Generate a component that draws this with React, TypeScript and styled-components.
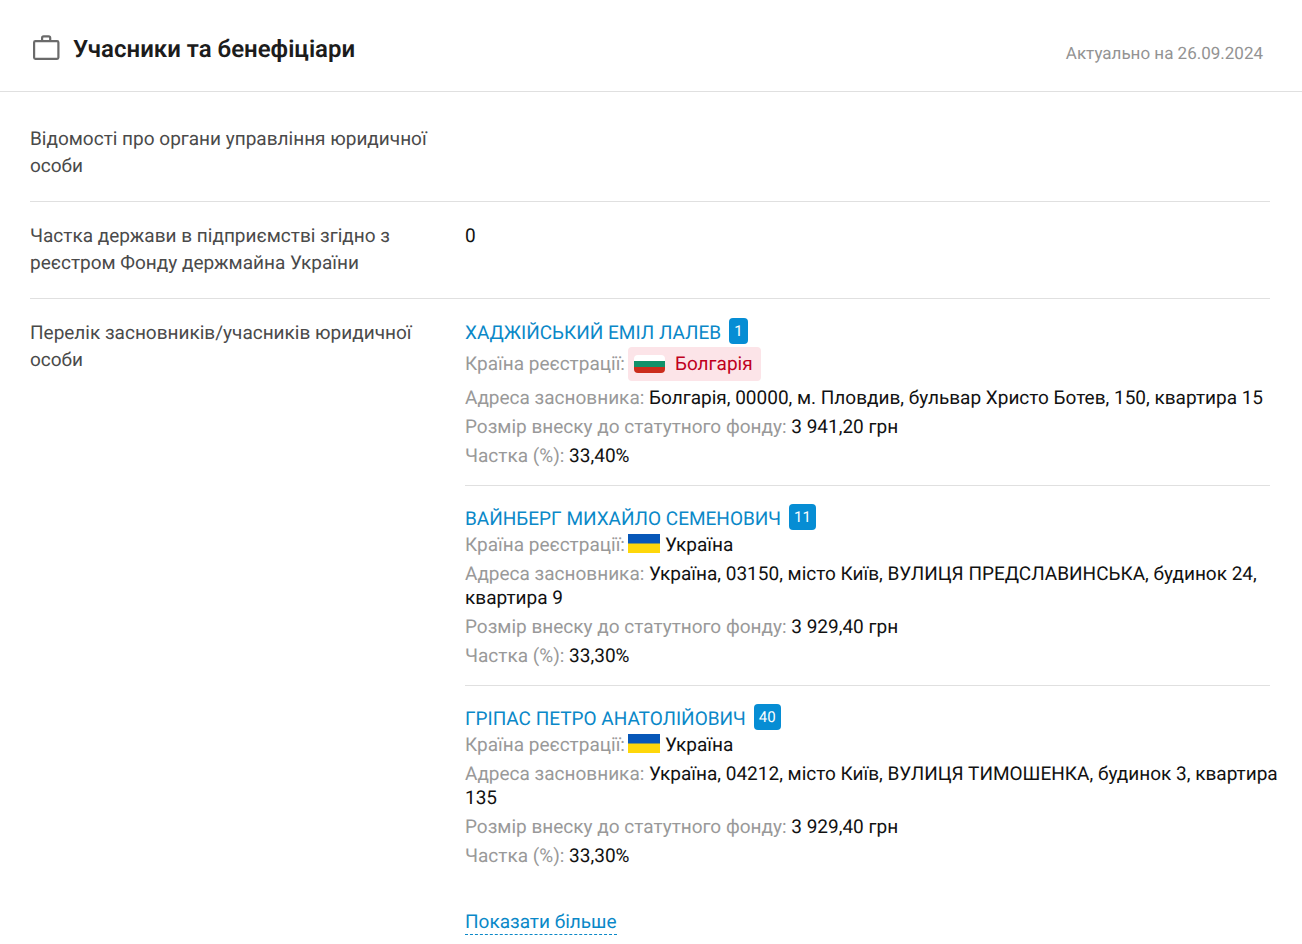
import React from "react";
import styled, { createGlobalStyle, css } from "styled-components";

const GlobalStyle = createGlobalStyle`
  *, *::before, *::after { box-sizing: border-box; }
  body {
    margin: 0;
    background: #fff;
    color: #111;
    font-family: Roboto, "Liberation Sans", sans-serif;
    font-size: 19px;
    line-height: 24px;
    text-rendering: geometricPrecision;
  }
`;

const Header = styled.header`
  display: flex;
  align-items: center;
  justify-content: space-between;
  padding: 29px 39px 22px 30px;
  border-bottom: 1px solid #e0e0e0;
`;

const Heading = styled.div`
  display: flex;
  align-items: center;
  gap: 11px;
`;

const Title = styled.h2`
  margin: 0;
  font-size: 24px;
  line-height: 40px;
  font-weight: 600;
  color: #1c1c1c;
`;

const Updated = styled.span`
  padding-top: 9px;
  font-size: 17px;
  color: #939393;
`;

const Details = styled.dl`
  margin: 0;
  padding: 13px 32px 0 30px;
`;

const Row = styled.div`
  display: grid;
  grid-template-columns: 435px minmax(0, 1fr);
  padding: 20px 0 22px;
  line-height: 27px;

  & + & {
    border-top: 1px solid #e0e0e0;
  }
`;

const Label = styled.dt`
  padding-right: 30px;
  color: #4a4a4a;
`;

const Value = styled.dd`
  margin: 0;
`;

const FounderList = styled.ul`
  margin: 0;
  padding: 0;
  list-style: none;
  line-height: 24px;
`;

const FounderItem = styled.li`
  padding-bottom: 17px;

  & + & {
    padding-top: 19px;
    border-top: 1px solid #e0e0e0;
  }
`;

const NameLine = styled.div`
  display: flex;
  align-items: flex-start;
  gap: 8px;
  margin-bottom: 1px;
  line-height: 27px;
`;

const linkColor = css`
  color: #0a88c8;
  text-decoration: none;
`;

const NameLink = styled.a`
  ${linkColor}
`;

const Badge = styled.a`
  margin-top: -1px;
  padding: 0 5px;
  border-radius: 4px;
  background: #068dd4;
  color: #fff;
  font-size: 15px;
  line-height: 26px;
  text-decoration: none;
`;

const Field = styled.div`
  & + & {
    margin-top: 5px;
  }
`;

const CountryField = styled(Field)`
  display: flex;
  align-items: center;
  gap: 3px;
`;

/* Long addresses may run into the page gutter before they wrap. */
const AddressField = styled(Field)`
  margin-right: -12px;
`;

const FieldName = styled.span`
  color: #999;
`;

const Country = styled.span<{ $flagged?: boolean }>`
  display: inline-flex;
  align-items: center;
  gap: 5px;
  ${(p) =>
    p.$flagged &&
    css`
      gap: 10px;
      padding: 5px 8px 5px 6px;
      border-radius: 4px;
      background: #fce4e8;
      color: #c00020;
    `}
`;

const Flag = styled.svg<{ $rounded?: boolean }>`
  display: block;
  flex: none;
  margin-bottom: ${(p) => (p.$rounded ? "0" : "3px")};
  border-radius: ${(p) => (p.$rounded ? "4px" : "0")};
`;

const MoreButton = styled.button`
  ${linkColor}
  display: block;
  margin-top: 25px;
  padding: 0;
  border: 0;
  border-bottom: 1px dashed #0a88c8;
  background: none;
  font: inherit;
  line-height: 24px;
  text-rendering: inherit;
  cursor: pointer;
`;

type CountryCode = "bg" | "ua";

interface Founder {
  name: string;
  links: number;
  code: CountryCode;
  country: string;
  address: string;
  amount: string;
  share: string;
}

const founders: Founder[] = [
  {
    name: "ХАДЖІЙСЬКИЙ ЕМІЛ ЛАЛЕВ",
    links: 1,
    code: "bg",
    country: "Болгарія",
    address: "Болгарія, 00000, м. Пловдив, бульвар Христо Ботев, 150, квартира 15",
    amount: "3 941,20 грн",
    share: "33,40%",
  },
  {
    name: "ВАЙНБЕРГ МИХАЙЛО СЕМЕНОВИЧ",
    links: 11,
    code: "ua",
    country: "Україна",
    address: "Україна, 03150, місто Київ, ВУЛИЦЯ ПРЕДСЛАВИНСЬКА, будинок 24, квартира 9",
    amount: "3 929,40 грн",
    share: "33,30%",
  },
  {
    name: "ГРІПАС ПЕТРО АНАТОЛІЙОВИЧ",
    links: 40,
    code: "ua",
    country: "Україна",
    address: "Україна, 04212, місто Київ, ВУЛИЦЯ ТИМОШЕНКА, будинок 3, квартира 135",
    amount: "3 929,40 грн",
    share: "33,30%",
  },
];

const BriefcaseIcon = () => (
  <svg width="32" height="32" viewBox="0 0 32 32" fill="none" stroke="#6a6a6a" strokeWidth="2.2" aria-hidden="true">
    <rect x="4.1" y="8.1" width="24.3" height="17.8" rx="1.3" />
    <path d="M12.1 8V5Q12.1 3.4 13.6 3.4H18.7Q20.2 3.4 20.2 5V8" />
  </svg>
);

const CountryFlag = ({ code }: { code: CountryCode }) =>
  code === "bg" ? (
    <Flag $rounded width="31" height="18" viewBox="0 0 31 18" aria-hidden="true">
      <rect width="31" height="6" fill="#fff" />
      <rect y="6" width="31" height="6" fill="#11916a" />
      <rect y="12" width="31" height="6" fill="#cb2d1c" />
    </Flag>
  ) : (
    <Flag width="32" height="19" viewBox="0 0 32 19" aria-hidden="true">
      <rect width="32" height="10" fill="#0757b8" />
      <rect y="9.5" width="32" height="9.5" fill="#fed70a" />
    </Flag>
  );

const FounderCard = ({ founder }: { founder: Founder }) => (
  <FounderItem>
    <NameLine>
      <NameLink href="#founder">{founder.name}</NameLink>
      <Badge href="#links">{founder.links}</Badge>
    </NameLine>
    <CountryField>
      <FieldName>Країна реєстрації:</FieldName>
      <Country $flagged={founder.code === "bg"}>
        <CountryFlag code={founder.code} />
        {founder.country}
      </Country>
    </CountryField>
    <AddressField>
      <FieldName>Адреса засновника:</FieldName> {founder.address}
    </AddressField>
    <Field>
      <FieldName>Розмір внеску до статутного фонду:</FieldName> {founder.amount}
    </Field>
    <Field>
      <FieldName>Частка (%):</FieldName> {founder.share}
    </Field>
  </FounderItem>
);

export default function App() {
  return (
    <main>
      <GlobalStyle />
      <Header>
        <Heading>
          <BriefcaseIcon />
          <Title>Учасники та бенефіціари</Title>
        </Heading>
        <Updated>Актуально на 26.09.2024</Updated>
      </Header>
      <Details>
        <Row>
          <Label>Відомості про органи управління юридичної особи</Label>
          <Value />
        </Row>
        <Row>
          <Label>Частка держави в підприємстві згідно з реєстром Фонду держмайна України</Label>
          <Value>0</Value>
        </Row>
        <Row>
          <Label>Перелік засновників/учасників юридичної особи</Label>
          <Value>
            <FounderList>
              {founders.map((founder) => (
                <FounderCard key={founder.name} founder={founder} />
              ))}
            </FounderList>
            <MoreButton type="button">Показати більше</MoreButton>
          </Value>
        </Row>
      </Details>
    </main>
  );
}
